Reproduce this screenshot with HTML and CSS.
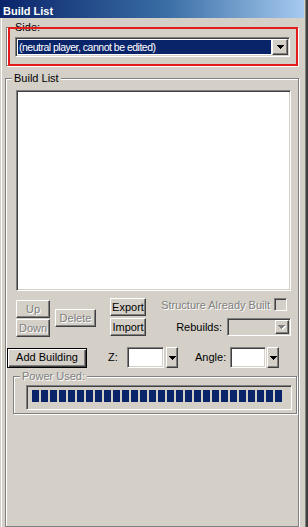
FILE: index.html
```html
<!DOCTYPE html>
<html>
<head>
<meta charset="utf-8">
<link rel="stylesheet" href="styles.css">
</head>
<body>
<div class="window">
  <div class="titlebar">Build List</div>
  <div class="group side-group">
    <span class="legend">Side:</span>
    <div class="combo side-combo sunken">
      <div class="combo-value selected">(neutral player, cannot be edited)</div>
      <div class="combo-btn btn"><svg class="arrow" width="7" height="4" viewBox="0 0 7 4"><path d="M0 0h7v1H0zM1 1h5v1H1zM2 2h3v1H2zM3 3h1v1H3z"/></svg></div>
    </div>
    <div class="annotation"></div>
  </div>
  <div class="group build-group">
    <span class="legend">Build List</span>
    <div class="listbox sunken"></div>
    <div class="controls">
      <div class="updown">
        <div class="btn disabled">Up</div>
        <div class="btn disabled">Down</div>
      </div>
      <div class="btn disabled delete">Delete</div>
      <div class="io">
        <div class="btn">Export</div>
        <div class="btn">Import</div>
      </div>
      <div class="options">
        <div class="opt-row check-row">
          <span class="disabled">Structure Already Built</span>
          <span class="checkbox sunken"></span>
        </div>
        <div class="opt-row rebuild-row">
          <span>Rebuilds:</span>
          <div class="combo rebuild-combo sunken">
            <div class="combo-value"></div>
            <div class="combo-btn btn"><svg class="arrow arrow-off" width="8" height="5" viewBox="0 0 8 5"><path fill="#fff" d="M1 1h7v1H1zM2 2h5v1H2zM3 3h3v1H3zM4 4h1v1H4z"/><path fill="#808080" d="M0 0h7v1H0zM1 1h5v1H1zM2 2h3v1H2zM3 3h1v1H3z"/></svg></div>
          </div>
        </div>
      </div>
    </div>
    <div class="add-row">
      <div class="btn default-btn">Add Building</div>
      <span class="field-label z-label">Z:</span>
      <div class="spin-field sunken z-field"></div>
      <div class="btn spin-btn z-btn"><svg class="arrow" width="7" height="4" viewBox="0 0 7 4"><path d="M0 0h7v1H0zM1 1h5v1H1zM2 2h3v1H2zM3 3h1v1H3z"/></svg></div>
      <span class="field-label angle-label">Angle:</span>
      <div class="spin-field sunken angle-field"></div>
      <div class="btn spin-btn angle-btn"><svg class="arrow" width="7" height="4" viewBox="0 0 7 4"><path d="M0 0h7v1H0zM1 1h5v1H1zM2 2h3v1H2zM3 3h1v1H3z"/></svg></div>
    </div>
    <div class="group power-group">
      <span class="legend disabled">Power Used:</span>
      <div class="progress sunken"><div class="progress-fill"></div></div>
    </div>
  </div>
</div>
</body>
</html>
```

FILE: styles.css
```css
* { box-sizing: border-box; }
body {
  margin: 0;
  background: #fff;
  font-family: "Liberation Sans", Arial, sans-serif;
  font-size: 11px;
  color: #000;
}
.window {
  width: 308px;
  height: 527px;
  overflow: hidden;
  background: #d4d0c8;
  display: flex;
  flex-direction: column;
  align-items: flex-start;
  box-shadow: inset 1px 0 #d4d0c8, inset 2px 0 #fff,
              inset -2px 0 #404040, inset -3px 0 #808080;
}
.titlebar {
  width: 304px;
  height: 18px;
  padding: 5px 0 0 3px;
  line-height: 13px;
  font-weight: bold;
  color: #fff;
  background: linear-gradient(90deg, #0a246a 0%, #3a6ea5 55%, #a6caf0 100%);
}
.group {
  border: 1px solid #808080;
  box-shadow: inset 1px 1px #fff, 1px 1px #fff;
}
.legend {
  display: block;
  width: max-content;
  margin-top: -7px;
  padding: 0 2px;
  line-height: 13px;
  background: #d4d0c8;
}
.disabled {
  color: #808080;
  text-shadow: 1px 1px #fff;
}
.sunken {
  border: 1px solid;
  border-color: #808080 #fff #fff #808080;
  box-shadow: inset 1px 1px #404040, inset -1px -1px #d4d0c8;
}
.btn {
  display: flex;
  align-items: center;
  justify-content: center;
  background: #d4d0c8;
  border: 1px solid;
  border-color: #fff #404040 #404040 #fff;
  box-shadow: inset -1px -1px #808080;
  line-height: 13px;
}

/* Side group */
.side-group {
  position: relative;
  margin: 9px 0 0 6px;
  width: 292px;
  padding: 0 0 8px 8px;
}
.side-group .legend { margin-left: -2px; }
.combo {
  display: flex;
  padding: 1px;
}
.side-combo {
  margin-top: 3px;
  width: 275px;
  height: 20px;
  background: #fff;
}
.combo-value {
  flex: 1;
  margin: 1px;
  line-height: 14px;
  padding-left: 1px;
  white-space: nowrap;
  overflow: hidden;
}
.selected {
  background: #0a246a;
  color: #fff;
  font-size: 10.5px;
  letter-spacing: -0.5px;
}
.combo-btn {
  width: 16px;
  height: 100%;
}
.annotation {
  position: absolute;
  left: 1px;
  top: -1px;
  width: 290px;
  height: 39px;
  border: 2px solid #e31b1b;
}

/* Build list group */
.build-group {
  margin: 12px 0 0 5px;
  width: 294px;
  height: 480px;
  padding: 0 0 0 10px;
}
.build-group > .legend { margin-left: -4px; }
.listbox {
  margin-top: 5px;
  width: 275px;
  height: 201px;
  background: #fff;
}
.controls {
  display: flex;
  margin-top: 7px;
  width: 275px;
  height: 39px;
}
.updown {
  display: flex;
  flex-direction: column;
  gap: 1px;
  margin-top: 2px;
  width: 34px;
}
.updown .btn { height: 18px; }
.delete {
  width: 41px;
  height: 18px;
  margin: 11px 0 0 5px;
}
.io {
  display: flex;
  flex-direction: column;
  gap: 2px;
  margin-left: 14px;
  width: 36px;
}
.io .btn { height: 18px; }
.options {
  flex: 1;
  display: flex;
  flex-direction: column;
  align-items: flex-end;
}
.opt-row {
  display: flex;
  align-items: center;
}
.check-row { height: 13px; }
.checkbox {
  width: 13px;
  height: 13px;
  margin: 0 4px;
  background: #d4d0c8;
}
.rebuild-row { margin-top: 7px; }
.rebuild-combo {
  width: 64px;
  height: 18px;
  margin-left: 5px;
  background: #d4d0c8;
}
.rebuild-combo .combo-btn { width: 14px; }

/* Add building row */
.add-row {
  display: flex;
  align-items: center;
  margin: 10px 0 0 -9px;
  height: 21px;
}
.default-btn {
  width: 80px;
  height: 20px;
  border: 1px solid #000;
  box-shadow: inset 1px 1px #fff, inset -1px -1px #404040, inset -2px -2px #808080;
}
.field-label { line-height: 13px; }
.z-label { margin-left: 21px; width: 19px; }
.angle-label { margin-left: 17px; width: 35px; }
.spin-field {
  height: 21px;
  background: #fff;
}
.z-field { width: 37px; }
.angle-field { width: 36px; }
.spin-btn {
  width: 12px;
  height: 21px;
}
.z-btn { margin-left: 2px; }
.angle-btn { margin-left: 1px; }

/* Power group */
.power-group {
  margin: 8px 0 0 -3px;
  width: 284px;
  padding: 0 0 3px 12px;
}
.power-group .legend { margin-left: -6px; }
.progress {
  margin-top: 2px;
  width: 266px;
  height: 25px;
  padding: 4px 0 0 5px;
}
.progress-fill {
  width: 250px;
  height: 12px;
  background: repeating-linear-gradient(90deg, #0a246a 0 7px, transparent 7px 9px);
}
```
